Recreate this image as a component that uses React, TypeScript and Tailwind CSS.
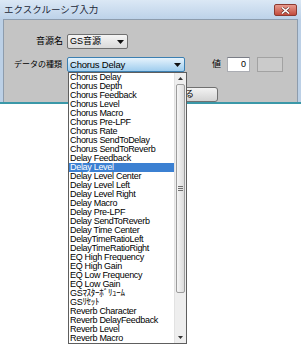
import React from "react";

const items = [
  "Chorus Delay",
  "Chorus Depth",
  "Chorus Feedback",
  "Chorus Level",
  "Chorus Macro",
  "Chorus Pre-LPF",
  "Chorus Rate",
  "Chorus SendToDelay",
  "Chorus SendToReverb",
  "Delay Feedback",
  "Delay Level",
  "Delay Level Center",
  "Delay Level Left",
  "Delay Level Right",
  "Delay Macro",
  "Delay Pre-LPF",
  "Delay SendToReverb",
  "Delay Time Center",
  "DelayTimeRatioLeft",
  "DelayTimeRatioRight",
  "EQ High Frequency",
  "EQ High Gain",
  "EQ Low Frequency",
  "EQ Low Gain",
  "GSﾏｽﾀｰﾎﾞﾘｭｰﾑ",
  "GSﾘｾｯﾄ",
  "Reverb Character",
  "Reverb DelayFeedback",
  "Reverb Level",
  "Reverb Macro",
];

const Arrow: React.FC = () => (
  <svg width="7" height="4" viewBox="0 0 7 4" className="block">
    <path d="M0 0H7L3.5 4Z" fill="#111" />
  </svg>
);

const App: React.FC = () => {
  return (
    <div className="relative w-[301px] h-[347px] bg-white overflow-hidden font-['Liberation_Sans','Noto_Sans_CJK_JP',sans-serif] text-black">
      {/* window */}
      <div className="bg-[#bcd0e6] border-b-2 border-[#3b98a8]">
        <div className="h-[19px] flex items-center justify-between pl-[4px] pr-[4px] bg-gradient-to-b from-[#dbe8f5] to-[#bdd2e9]">
          <span className="text-[9.5px] leading-none text-[#1c2838]">
            エクスクルーシブ入力
          </span>
          <div className="w-[23px] h-[12px] mt-[1px] rounded-[2px] border border-[#8c3a30] bg-gradient-to-b from-[#e79a8e] to-[#c24a3c] flex items-center justify-center">
            <svg width="9" height="7" viewBox="0 0 9 7">
              <path d="M1 0.5L8 6.5M8 0.5L1 6.5" stroke="#5b2620" strokeWidth="2.6" />
              <path d="M1 0.5L8 6.5M8 0.5L1 6.5" stroke="#fff" strokeWidth="1.6" />
            </svg>
          </div>
        </div>
        <div className="mx-[3px] h-[83px] bg-[#c4c4c4] border border-[#8d9cad] border-b-0 flex flex-col text-[9px] leading-none">
          {/* row 1 */}
          <div className="flex items-center mt-[14px] h-[15px]">
            <div className="w-[63px] text-right pr-[4px]">音源名</div>
            <div className="w-[61px] h-[15px] rounded-[2px] border border-[#707070] bg-gradient-to-b from-[#f5f5f5] to-[#dadada] flex items-center justify-between pl-[2px] pr-[3px]">
              <span>GS音源</span>
              <Arrow />
            </div>
          </div>
          {/* row 2 */}
          <div className="flex items-center mt-[8px] h-[15px]">
            <div className="w-[63px] text-right pr-[5px] text-[8px]">データの種類</div>
            <div className="w-[118px] h-[15px] rounded-[2px] border border-[#3c7fb1] bg-gradient-to-b from-[#e6f3fc] to-[#9fcdee] flex items-center justify-between pl-[2px] pr-[3px]">
              <span className="text-[9.5px] tracking-[-0.2px]">Chorus Delay</span>
              <Arrow />
            </div>
            <div className="ml-[27px] w-[9px]">値</div>
            <div className="ml-[6px] w-[23px] h-[15px] bg-white border border-[#abadb3] border-t-[#7a7d86] flex items-center justify-end pr-[3px]">
              0
            </div>
            <div className="ml-[7px] w-[26px] h-[15px] border border-[#a2a2a2] bg-[#cbcbcb]" />
          </div>
          {/* button row */}
          <div className="flex mt-[15px]">
            <div className="ml-[139px] w-[75px] h-[15px] rounded-[3px] border border-[#707070] bg-gradient-to-b from-[#f3f3f3] to-[#d3d3d3] flex items-center justify-center">
              閉じる
            </div>
          </div>
        </div>
      </div>

      {/* open drop-down list */}
      <div className="absolute left-[68px] top-[72px] w-[119px] h-[272px] bg-white border border-[#5e5e5e] flex">
        <div className="flex-1 flex flex-col">
          {items.map((item, i) => (
            <div
              key={item}
              className={
                i === 10
                  ? "h-[9px] leading-[9px] text-[9px] tracking-[-0.3px] pl-[1px] whitespace-nowrap bg-[#3b80d2] text-white"
                  : "h-[9px] leading-[9px] text-[9px] tracking-[-0.3px] pl-[1px] whitespace-nowrap"
              }
            >
              {item}
            </div>
          ))}
        </div>
        {/* scrollbar */}
        <div className="w-[12px] bg-[#eeeeee] border-l border-[#e2e2e2] flex flex-col">
          <div className="h-[11px] flex items-center justify-center">
            <svg width="5" height="3" viewBox="0 0 5 3">
              <path d="M0 3H5L2.5 0Z" fill="#333" />
            </svg>
          </div>
          <div className="h-[209px] mx-[1px] rounded-[2px] border border-[#9c9c9c] bg-gradient-to-r from-[#f6f6f6] to-[#dcdcdc] flex items-center justify-center">
            <div className="flex flex-col gap-[1px]">
              <div className="w-[5px] h-[1px] bg-[#6f6f6f]" />
              <div className="w-[5px] h-[1px] bg-[#6f6f6f]" />
              <div className="w-[5px] h-[1px] bg-[#6f6f6f]" />
            </div>
          </div>
          <div className="flex-1" />
          <div className="h-[11px] flex items-center justify-center">
            <svg width="5" height="3" viewBox="0 0 5 3">
              <path d="M0 0H5L2.5 3Z" fill="#333" />
            </svg>
          </div>
        </div>
      </div>
    </div>
  );
};

export default App;
